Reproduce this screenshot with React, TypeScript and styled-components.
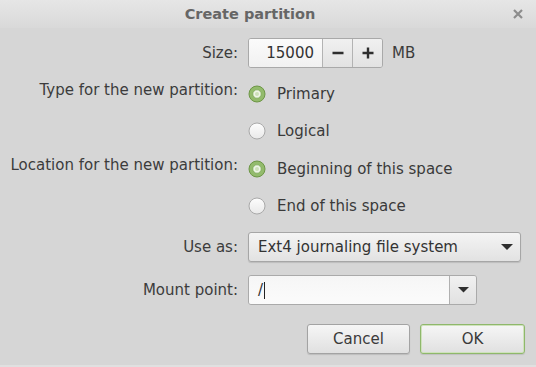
import React from "react";
import styled, { createGlobalStyle } from "styled-components";

const Global = createGlobalStyle`
  html, body { margin: 0; padding: 0; }
  body {
    width: 536px;
    height: 367px;
    overflow: hidden;
    background: #d6d6d6;
    font-family: "DejaVu Sans", "Liberation Sans", sans-serif;
    font-size: 15px;
    color: #3a3a3a;
  }
`;

const Window = styled.div`
  width: 536px;
  height: 367px;
  display: flex;
  flex-direction: column;
  background: #d6d6d6;
  box-sizing: border-box;
  border-bottom: 2px solid #e0e0e0;
`;

const TitleBar = styled.div`
  height: 28px;
  display: flex;
  align-items: center;
  background: linear-gradient(#e6e6e6, #d9d9d9);
`;

const Title = styled.div`
  flex: 1;
  text-align: center;
  font-weight: bold;
  font-size: 14.5px;
  color: #666666;
`;

const CloseBox = styled.div`
  width: 36px;
  height: 28px;
  display: flex;
  align-items: center;
  justify-content: center;
`;

const Form = styled.div`
  display: flex;
  flex-direction: column;
  gap: 13px;
  padding: 10px 0 0 10px;
`;

const Row = styled.div<{ $space?: number; $h?: number }>`
  display: flex;
  align-items: center;
  gap: 10px;
  height: ${(p) => p.$h ?? 24}px;
  margin-top: ${(p) => p.$space ?? 0}px;
`;

const Label = styled.div<{ $raise?: boolean }>`
  width: 228px;
  text-align: right;
  white-space: nowrap;
  color: #3c3c3c;
  margin-bottom: ${(p) => (p.$raise ? 9 : 0)}px;
`;

const Spin = styled.div`
  display: flex;
  height: 30px;
  box-sizing: border-box;
  border: 1px solid #a9a9a9;
  border-radius: 3px;
  overflow: hidden;
  background: linear-gradient(#f4f4f4, #e9e9e9);
`;

const SpinText = styled.div`
  width: 73px;
  box-sizing: border-box;
  padding-right: 8px;
  display: flex;
  align-items: center;
  justify-content: flex-end;
  background: linear-gradient(#fbfbfb, #f1f1f1);
  color: #333;
`;

const SpinButton = styled.div`
  width: 29px;
  display: flex;
  align-items: center;
  justify-content: center;
  border-left: 1px solid #b3b3b3;
  background: linear-gradient(#f0f0f0, #e2e2e2);
`;

const Unit = styled.div`
  margin-left: -1px;
  color: #3c3c3c;
`;

const RadioItem = styled.div`
  display: flex;
  align-items: center;
  gap: 11px;
  color: #3a3a3a;
`;

const Combo = styled.div`
  width: 273px;
  height: 30px;
  box-sizing: border-box;
  border: 1px solid #a6a6a6;
  border-radius: 3px;
  background: linear-gradient(#f4f4f4, #e2e2e2);
  box-shadow: 0 1px 1px rgba(0, 0, 0, 0.12);
  display: flex;
  align-items: center;
  justify-content: space-between;
  padding: 0 7px 0 9px;
  color: #333;
`;

const EntryCombo = styled.div`
  display: flex;
  width: 229px;
  height: 30px;
  box-sizing: border-box;
  border: 1px solid #aaaaaa;
  border-radius: 3px;
  overflow: hidden;
`;

const EntryField = styled.div`
  flex: 1;
  display: flex;
  align-items: center;
  padding-left: 9px;
  background: linear-gradient(#f6f6f6, #fbfbfb);
  color: #333;
`;

const Caret = styled.span`
  display: inline-block;
  width: 1px;
  height: 17px;
  background: #222;
  margin-left: 1px;
`;

const EntryButton = styled.div`
  width: 26px;
  display: flex;
  align-items: center;
  justify-content: center;
  border-left: 1px solid #b0b0b0;
  background: linear-gradient(#f1f1f1, #e1e1e1);
`;

const Actions = styled.div`
  display: flex;
  justify-content: flex-end;
  gap: 10px;
  padding-right: 11px;
  margin-top: 19px;
`;

const Button = styled.div<{ $default?: boolean }>`
  width: ${(p) => (p.$default ? 105 : 103)}px;
  height: 30px;
  box-sizing: border-box;
  border: 1px solid ${(p) => (p.$default ? "#8fb86b" : "#a3a3a3")};
  border-radius: 3px;
  background: linear-gradient(#f6f6f6, #e0e0e0);
  box-shadow: ${(p) =>
    p.$default
      ? "inset 0 0 0 1px #cfe2bd, 0 1px 1px rgba(0,0,0,0.1)"
      : "0 1px 1px rgba(0,0,0,0.12)"};
  display: flex;
  align-items: center;
  justify-content: center;
  color: #3a3a3a;
`;

const Arrow = ({ w = 12 }: { w?: number }) => (
  <svg width={w} height={w / 2} viewBox="0 0 12 6">
    <path d="M0 0 L12 0 L6 6 Z" fill="#2e2e2e" />
  </svg>
);

const Radio = ({ checked }: { checked?: boolean }) =>
  checked ? (
    <svg width="18" height="18" viewBox="0 0 18 18">
      <circle cx="9" cy="9" r="8" fill="#93bb6c" stroke="#6d9646" strokeWidth="1" />
      <circle cx="9" cy="9" r="4.2" fill="#eef5e6" stroke="#7ea85a" strokeWidth="0.8" />
      <circle cx="9" cy="9" r="2" fill="#cde0b9" />
    </svg>
  ) : (
    <svg width="18" height="18" viewBox="0 0 18 18">
      <defs>
        <linearGradient id="rg" x1="0" y1="0" x2="0" y2="1">
          <stop offset="0" stopColor="#fdfdfd" />
          <stop offset="1" stopColor="#e9e9e9" />
        </linearGradient>
      </defs>
      <circle cx="9" cy="9" r="8" fill="url(#rg)" stroke="#a9a9a9" strokeWidth="1" />
    </svg>
  );

export default function App() {
  return (
    <>
      <Global />
      <Window>
        <TitleBar>
          <Title>Create partition</Title>
          <CloseBox>
            <svg width="10" height="10" viewBox="0 0 10 10">
              <path d="M1 1 L9 9 M9 1 L1 9" stroke="#8c8c8c" strokeWidth="2.2" />
            </svg>
          </CloseBox>
        </TitleBar>
        <Form>
          <Row $h={30}>
            <Label>Size:</Label>
            <Spin>
              <SpinText>15000</SpinText>
              <SpinButton>
                <svg width="12" height="12" viewBox="0 0 12 12">
                  <path d="M0.5 6 H11.5" stroke="#2e2e2e" strokeWidth="2.4" />
                </svg>
              </SpinButton>
              <SpinButton>
                <svg width="12" height="12" viewBox="0 0 12 12">
                  <path d="M0.5 6 H11.5 M6 0.5 V11.5" stroke="#2e2e2e" strokeWidth="2.4" />
                </svg>
              </SpinButton>
            </Spin>
            <Unit>MB</Unit>
          </Row>
          <Row $space={1}>
            <Label $raise>Type for the new partition:</Label>
            <RadioItem>
              <Radio checked />
              Primary
            </RadioItem>
          </Row>
          <Row>
            <Label />
            <RadioItem>
              <Radio />
              Logical
            </RadioItem>
          </Row>
          <Row $space={1}>
            <Label $raise>Location for the new partition:</Label>
            <RadioItem>
              <Radio checked />
              Beginning of this space
            </RadioItem>
          </Row>
          <Row>
            <Label />
            <RadioItem>
              <Radio />
              End of this space
            </RadioItem>
          </Row>
          <Row $h={30} $space={1}>
            <Label>Use as:</Label>
            <Combo>
              <span>Ext4 journaling file system</span>
              <Arrow />
            </Combo>
          </Row>
          <Row $h={30}>
            <Label>Mount point:</Label>
            <EntryCombo>
              <EntryField>
                /<Caret />
              </EntryField>
              <EntryButton>
                <Arrow w={11} />
              </EntryButton>
            </EntryCombo>
          </Row>
        </Form>
        <Actions>
          <Button>Cancel</Button>
          <Button $default>OK</Button>
        </Actions>
      </Window>
    </>
  );
}
